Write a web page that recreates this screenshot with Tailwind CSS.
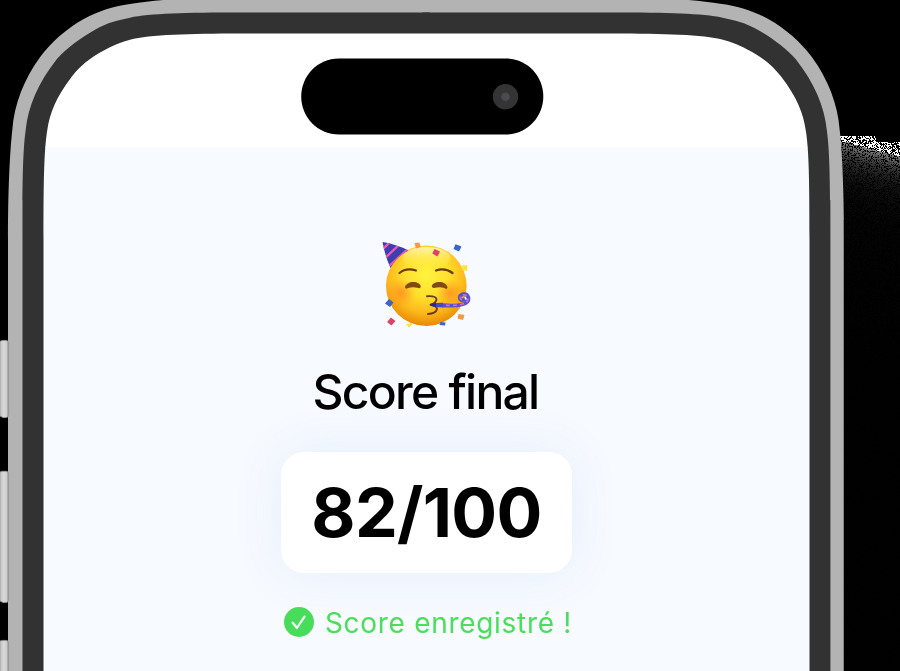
<!DOCTYPE html>
<html lang="fr">
<head>
<meta charset="utf-8">
<meta name="viewport" content="width=device-width, initial-scale=1">
<title>Score final</title>
<script src="https://cdn.jsdelivr.net/npm/@tailwindcss/browser@4"></script>
</head>
<body class="bg-black overflow-hidden">
<div class="relative w-[900px] h-[671px] overflow-hidden bg-black font-['Inter','Liberation_Sans',sans-serif]">
  <!-- Grainy cast shadow -->
  <canvas id="grain" width="60" height="540" class="absolute left-[840px] top-[131px]"></canvas>

  <!-- Phone body -->
  <svg class="absolute inset-0" width="900" height="671" viewBox="0 0 900 671" aria-hidden="true">
    <defs>
      <path id="metal" d="M8 680V240C8 195 9.500 155 12.300 130C14 105 24 79 40 57.300C51 42.500 66 29 83.300 19.300C97 11.600 113 6.200 130 4C150 1 165 -1 195 -1H430V680Z"/>
      <path id="bezel" d="M22.300 680V240C22.300 185 22.800 150 25.700 130C28 107 38 83 56.700 59.300C66 48.500 81 37.500 96.700 28.700C107 23 118 20 130 17.700C150 13.500 185 12.600 240 12.600H430V680Z"/>
      <path id="glass" d="M43.500 680V240C43.500 180 44 150 47.300 130C49.500 114 56 97 71.700 76.700C80 66 91 57 103.300 50.700C112 46 121 42 130 39.700C150 34.500 190 33.600 240 33.500H430V680Z"/>
      <clipPath id="screen"><use href="#glass"/><use href="#glass" transform="translate(853) scale(-1 1)"/></clipPath>
      <linearGradient id="key"><stop stop-color="#c4c4c4"/><stop offset=".45" stop-color="#d9d9d9"/><stop offset=".75" stop-color="#cecece"/><stop offset="1" stop-color="#858585"/></linearGradient>
    </defs>
    <g fill="#b3b3b3"><use href="#metal"/><use href="#metal" transform="translate(852) scale(-1 1)"/></g>
    <g fill="#323232"><use href="#bezel"/><use href="#bezel" transform="translate(852.500) scale(-1 1)"/></g>
    <path d="M22.500 200V671M830.500 200V671M843.500 220V671" stroke="#777" stroke-width=".8"/>
    <g clip-path="url(#screen)"><path fill="#fff" d="M40 30H815V148H40Z"/><path fill="#f7faff" d="M40 147.500H815V671H40Z"/></g>
    <g fill="url(#key)" stroke="#999" stroke-width=".8">
      <path d="M0 341.500Q1 340.400 3 340.400H6Q8.700 340.400 8.700 343.500V414Q8.700 417.500 6 417.500H3L0 416Z"/>
      <path d="M0 472Q1 471.300 3 471.300H6Q8.700 471.300 8.700 474V599Q8.700 602.500 6 602.500H3L0 601Z"/>
      <path d="M0 641Q1 640.400 3 640.400H6Q8.700 640.400 8.700 643V680H0Z"/>
    </g>
    <path d="M339 58.500H505.500C527 58.500 543.300 76 543.300 96.500S527 134.500 505.500 134.500H339C317.500 134.500 301.200 117 301.200 96.500S317.500 58.500 339 58.500Z"/>
    <circle cx="505.500" cy="96.700" r="12.700" fill="#343434"/><circle cx="505.500" cy="96.800" r="4.300" fill="#4a4a50"/>
  </svg>

  <main class="relative w-[853px] h-[671px] pt-[230px] flex flex-col items-center">
    <svg class="shrink-0 mr-[2px]" width="112" height="106" viewBox="0 0 112 106" role="img" aria-label="Fête">
      <defs>
        <radialGradient id="face" cx=".5" cy=".36" r=".66"><stop stop-color="#fff33e"/><stop offset=".42" stop-color="#ffdf2d"/><stop offset=".72" stop-color="#fdb91b"/><stop offset="1" stop-color="#e58200"/></radialGradient>
        <linearGradient id="shine" x2="0" y2="1"><stop stop-color="#fff9d2" stop-opacity=".8"/><stop offset="1" stop-color="#fff33e" stop-opacity="0"/></linearGradient>
        <radialGradient id="blush"><stop stop-color="#ff7f22" stop-opacity=".65"/><stop offset="1" stop-color="#ff8b1e" stop-opacity="0"/></radialGradient>
        <clipPath id="hat"><path d="M12.500 12Q26 14 38.500 20.500Q27 26 20.500 38Q15 26 12.500 12Z"/></clipPath>
      </defs>
      <circle cx="56.300" cy="55.800" r="40.300" fill="url(#face)"/>
      <ellipse cx="56.500" cy="28" rx="24" ry="11" fill="url(#shine)"/>
      <circle cx="31" cy="63" r="15" fill="url(#blush)"/><circle cx="80" cy="63" r="14" fill="url(#blush)"/>
      <g clip-path="url(#hat)"><path fill="#3d3fae" d="M10 10H42V40H10Z"/><g stroke="#ee58bd" stroke-width="2.300"><path d="M10 22L21 11M13 30L31 13M17 38L39 18"/></g></g>
      <g fill="none" stroke="#6b3d06" stroke-linecap="round" stroke-linejoin="round">
        <path stroke-width="2.200" d="M29.500 43Q36 37.500 46 40.500M66 40.500Q75 37.500 82.500 43"/>
        <path stroke-width="1.900" d="M57 66.200Q65.500 65.500 66.500 69Q66.500 73 60.500 74.700Q67 75.500 67 79Q66 83.500 58 84"/>
      </g>
      <path fill="#824c0c" d="M35 57.500C35.500 50.500 50 50 50.800 56.500C50.500 58.500 49 58.500 47.500 57.700Q42.500 56.500 38 58Q35.500 59.500 35 57.500ZM61.700 56.500C62.500 50 77 50.500 77.500 57.500C77 59.500 75.500 59 74.500 58Q70 56.500 65 57.700Q62.500 58.500 61.700 56.500Z"/>
      <path fill="#4948c5" d="M60.500 75.500Q61 72.500 73 72.700L75 77.500Q66 78 60.500 75.500Z"/><path fill="#30277a" d="M60 74L66 73V77L61 76Z"/>
      <path d="M73 75.200Q83 76.500 92 74.500Q99 73 98.500 68Q97.500 63.500 92.500 64.200Q88.500 65.500 90 69Q92 71.500 95 69" fill="none" stroke="#5550cf" stroke-width="3.700"/>
      <path d="M76 75.200Q83 76 92 74.200Q98.500 72.500 98 68Q97 64.500 92.500 64.800Q89.500 66 90.700 69Q92 70.500 94.500 69" fill="none" stroke="#d56ac6" stroke-width="1.700" stroke-dasharray="4 3"/>
      <path fill="#f29b43" d="M44.500 13L49.500 12.500L50.500 17L46 18.500ZM88.500 84L94.500 85L93 90L87.500 88.500Z"/>
      <path fill="#df4263" d="M64.500 19L70 21.500L67.500 26.500L62.300 23.500ZM21 87.500L25.500 91L21.500 95.500L17 92Z"/>
      <path fill="#3d65c9" d="M85.500 14.300L91.500 16.500L89 21.500L83.500 19ZM19 69L23.500 72.500L20 77L15 73.500ZM70.500 92L75.500 92.500L75 95.500L69.500 95Z"/>
      <path fill="#fbe33d" d="M92.500 35L97.500 35.500L97 41L91.500 40ZM36 94L43.500 93L39 97.500Z"/>
    </svg>
    <h1 class="mt-[26px] mr-[2px] h-[60px] text-[48px] leading-[60px] font-medium tracking-[-1.75px] text-black whitespace-nowrap">Score final</h1>
    <section class="mt-[30px] w-[291px] h-[121px] shrink-0 rounded-[23px] bg-white shadow-[0_0_50px_rgba(90,150,220,0.11)] flex items-center justify-center">
      <p class="mb-[2px] text-[68px] leading-[80px] font-bold tracking-[-0.7px] text-black whitespace-nowrap">82/100</p>
    </section>
    <div class="ml-[3px] mt-[29px] h-[40px] flex items-center gap-[11px] text-[#4cdd5c]">
      <svg width="30" height="30" viewBox="0 0 30 30" aria-hidden="true"><circle cx="15" cy="15" r="15" fill="#47dd5a"/><path d="M8.700 15.700L12.900 21L20.500 9.700" fill="none" stroke="#f7faff" stroke-width="2.200" stroke-linecap="round" stroke-linejoin="round"/></svg>
      <p class="pt-px text-[28px] leading-[40px] font-normal tracking-[0.7px] whitespace-nowrap">Score enregistré !</p>
    </div>
  </main>
</div>
<script>
  const canvas = document.getElementById('grain');
  const ctx = canvas.getContext('2d');
  let seed = 731;
  const random = () => (seed = (seed * 16807) % 2147483647) / 2147483647;
  for (let y = 0; y < 540; y++) for (let x = 0; x < 60; x++) {
    const top = x < 36 ? 5 : 11;
    const edge = x < 10 ? 11 : 12 + (x - 10) * 0.26;
    let value = 0;
    if (y >= top && y < edge) value = random() < 0.52 ? 255 : 0;
    else if (y >= edge) {
      const depth = y - edge;
      const level = 125 * Math.exp(-depth / 15) + 8 * Math.exp(-depth / 70) + 1;
      value = random() < 0.68 ? level * (0.75 + random() * 0.4) : 0;
    }
    ctx.fillStyle = `rgb(${value},${value},${value})`;
    ctx.fillRect(x, y, 1, 1);
  }
</script>
</body>
</html>
